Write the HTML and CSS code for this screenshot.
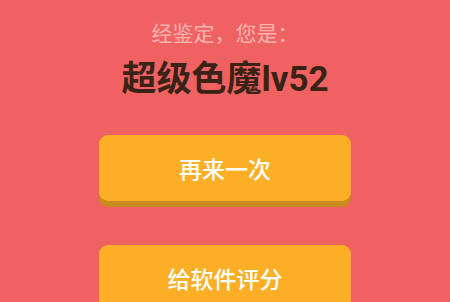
FILE: index.html
```html
<!DOCTYPE html>
<html lang="zh">
<head>
    <meta charset="UTF-8">
    <meta name="viewport" content="width=device-width, initial-scale=1.0">
    <title>结果</title>
    <link rel="stylesheet" href="styles.css">
</head>
<body>
    <div class="result-page">
        <div class="subtitle">经鉴定，您是：</div>
        <div class="title">超级色魔lv52</div>

        <div class="actions">
            <button class="action-btn">再来一次</button>
            <button class="action-btn">给软件评分</button>
        </div>
    </div>
</body>
</html>
```

FILE: styles.css
```css
body {
    margin: 0;
    background-color: #f06262;
    font-family: Roboto, 'Noto Sans CJK SC', sans-serif;
    overflow: hidden;
}

.result-page {
    display: flex;
    flex-direction: column;
    align-items: center;
    padding-top: 20px;
}

.subtitle {
    font-size: 21px;
    line-height: 28px;
    color: #f8b2b0;
}

.title {
    margin-top: 10px;
    font-size: 35px;
    line-height: 44px;
    font-weight: bold;
    color: #3a2316;
}

.actions {
    margin-top: 33px;
    display: flex;
    flex-direction: column;
    gap: 44px;
}

.action-btn {
    width: 252px;
    height: 66px;
    border: none;
    border-radius: 9px;
    background-color: #fcaf26;
    box-shadow: 0 6px 0 #c98a1e;
    color: #fff;
    font-family: inherit;
    font-size: 23px;
    font-weight: 500;
    cursor: pointer;
}
```
